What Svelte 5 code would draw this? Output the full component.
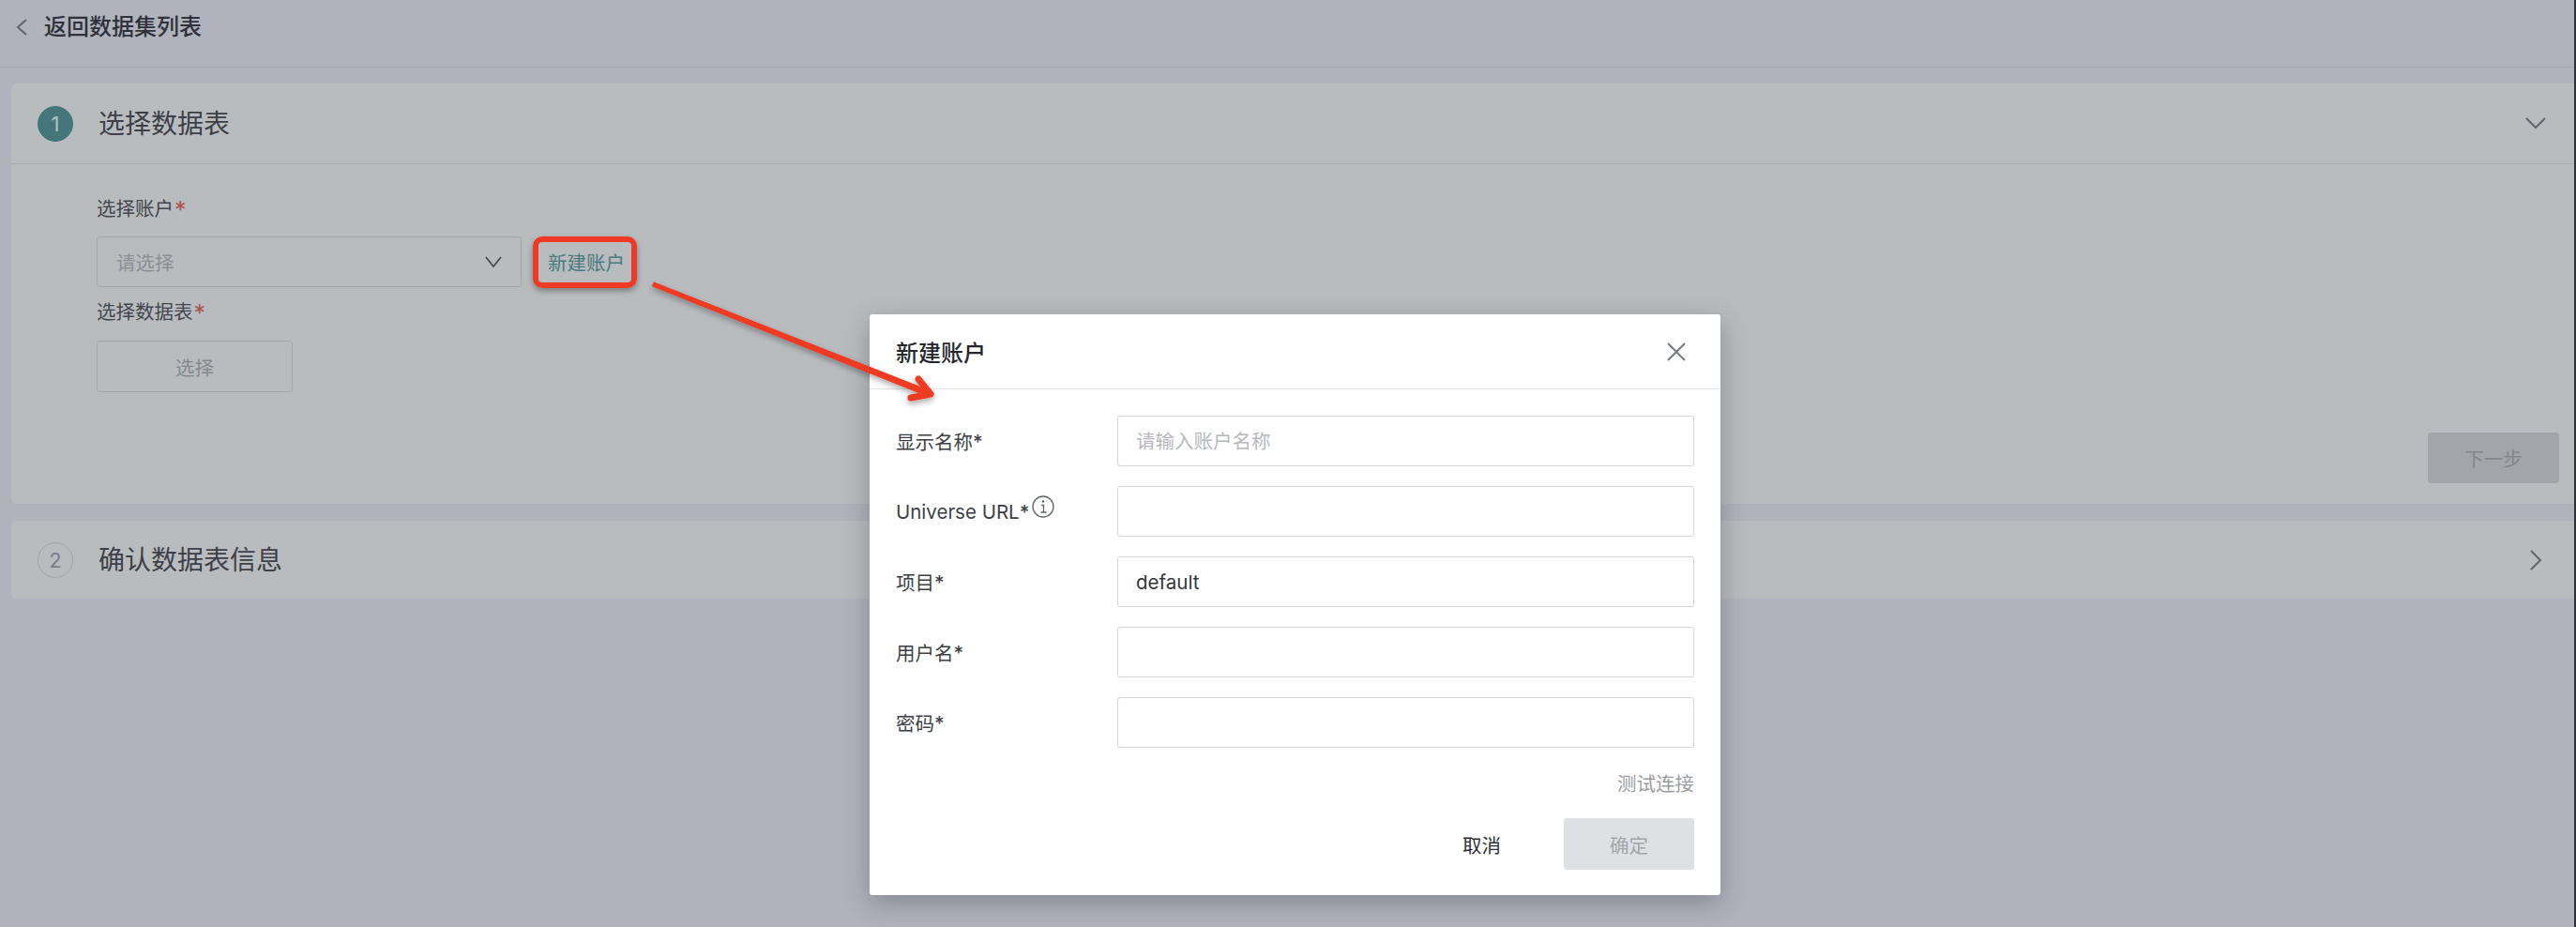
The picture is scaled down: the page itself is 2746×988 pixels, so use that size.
<script lang="ts">
  const fields = [
    { label: '显示名称', placeholder: '请输入账户名称', value: '' },
    { label: 'Universe URL', placeholder: '', value: '', info: true },
    { label: '项目', placeholder: '', value: 'default' },
    { label: '用户名', placeholder: '', value: '' },
    { label: '密码', placeholder: '', value: '' }
  ];
</script>

<div class="page">
  <header class="topbar">
    <svg class="back" width="12" height="18" viewBox="0 0 12 18"><path d="M11 1 2 9l9 8" /></svg>
    <span>返回数据集列表</span>
  </header>

  <main class="content">
    <section class="card first">
      <div class="card-head">
        <span class="step active">1</span>
        <h2>选择数据表</h2>
        <svg class="chev" width="22" height="13" viewBox="0 0 22 13"><path d="M1 1l10 10L21 1" /></svg>
      </div>
      <div class="card-body">
        <div class="lbl">选择账户<i>*</i></div>
        <div class="row">
          <div class="select">
            <span>请选择</span>
            <svg width="18" height="12" viewBox="0 0 18 12"><path d="M1 1l8 10 8-10" /></svg>
          </div>
          <a class="new-link">新建账户</a>
        </div>
        <div class="lbl second">选择数据表<i>*</i></div>
        <button class="pick">选择</button>
        <div class="next-row"><button class="next">下一步</button></div>
      </div>
    </section>

    <section class="card">
      <div class="card-head short">
        <span class="step">2</span>
        <h2>确认数据表信息</h2>
        <svg class="chev" width="13" height="22" viewBox="0 0 13 22"><path d="M1 1l10 10L1 21" /></svg>
      </div>
    </section>
  </main>

  <div class="modal">
    <div class="modal-head">
      <strong>新建账户</strong>
      <svg class="close" width="22" height="22" viewBox="0 0 22 22"><path d="M2 2l18 18M20 2 2 20" /></svg>
    </div>
    <div class="modal-body">
      {#each fields as f}
        <div class="field">
          <label>
            {f.label}<b>*</b>
            {#if f.info}
              <svg class="info" width="24" height="24" viewBox="0 0 24 24">
                <circle cx="12" cy="12" r="11" />
                <path d="M10 10.500h2.500V18M9.500 18h6" />
                <circle class="dot" cx="12" cy="6.500" r="1.300" />
              </svg>
            {/if}
          </label>
          <input placeholder={f.placeholder} value={f.value} />
        </div>
      {/each}
      <div class="test">测试连接</div>
      <div class="actions">
        <span class="cancel">取消</span>
        <button class="ok">确定</button>
      </div>
    </div>
  </div>

  <!-- red annotation drawn on top of the screenshot -->
  <div class="redbox"></div>
  <svg class="arrow" width="2744" height="988" viewBox="0 0 2744 988">
    <defs>
      <filter id="sh" x="-10%" y="-10%" width="120%" height="130%">
        <feDropShadow dx="0" dy="3" stdDeviation="3" flood-color="#000" flood-opacity="0.35" />
      </filter>
    </defs>
    <g filter="url(#sh)">
      <path class="shaft" d="M695.500 305 L697 301 L990 416 L988 422 Z" />
      <path class="head" d="M979 404 L992 420 L971 424" />
    </g>
  </svg>
</div>

<style>
  :global(body) {
    margin: 0;
    background: #2f3033;
  }
  .page {
    position: relative;
    width: 2744px;
    height: 988px;
    overflow: hidden;
    background: #b0b3bc;
    font-family: "Inter", "Noto Sans CJK SC", sans-serif;
    color: #33363d;
  }
  .topbar {
    height: 72px;
    box-sizing: border-box;
    border-bottom: 1px solid #a5a8b1;
    display: flex;
    align-items: flex-start;
    padding: 12px 0 0 17px;
    gap: 18px;
    font-size: 24px;
    line-height: 34px;
    font-weight: 500;
    color: #2f323a;
  }
  .back {
    margin-top: 8px;
  }
  .back path,
  .chev path,
  .select path {
    fill: none;
    stroke: #62656e;
    stroke-width: 2;
  }
  .content {
    padding: 17px 0 0 12px;
  }
  .card {
    background: #b9bcbf;
    border-radius: 6px 0 0 6px;
    margin-bottom: 18px;
  }
  .card-head {
    height: 86px;
    box-sizing: border-box;
    border-bottom: 1px solid #a8abb3;
    display: flex;
    align-items: center;
    padding: 0 30px 0 28px;
  }
  .card-head.short {
    height: 83px;
    border-bottom: none;
    padding-right: 34px;
  }
  .card-head h2 {
    flex: 1;
    margin: 0 0 4px 27px;
    font-size: 28px;
    font-weight: 400;
    color: #3d4047;
  }
  .step {
    width: 38px;
    height: 38px;
    box-sizing: border-box;
    border-radius: 50%;
    border: 1px solid #a0a3ab;
    display: flex;
    align-items: center;
    justify-content: center;
    font-size: 22px;
    color: #7a7e88;
  }
  .step.active {
    background: #45777a;
    border-color: #45777a;
    color: #b0c4c5;
  }
  .card-body {
    height: 362px;
    box-sizing: border-box;
    padding: 33px 0 0 91px;
    position: relative;
  }
  .lbl {
    font-size: 20.500px;
    line-height: 30px;
    color: #43464d;
    height: 30px;
  }
  .lbl i {
    color: #a9544f;
    font-style: normal;
    font-size: 25px;
    line-height: 0;
    margin-left: 1px;
    vertical-align: -3px;
  }
  .row {
    display: flex;
    align-items: center;
    margin-top: 14px;
  }
  .select {
    width: 453px;
    height: 54px;
    box-sizing: border-box;
    border: 1px solid #a3a6ad;
    border-radius: 3px;
    display: flex;
    align-items: center;
    justify-content: space-between;
    padding: 0 20px 0 20px;
    font-size: 20.500px;
    color: #8b8e94;
  }
  .select path {
    stroke: #3f4248;
    stroke-width: 1.600;
  }
  .new-link {
    margin-left: 28px;
    font-size: 20.500px;
    color: #4a7a7e;
  }
  .second {
    margin-top: 12px;
  }
  .pick {
    display: block;
    margin-top: 15px;
    width: 209px;
    height: 55px;
    background: transparent;
    border: 1px solid #a3a6ad;
    border-radius: 3px;
    font: inherit;
    font-size: 20.500px;
    color: #85888e;
  }
  .next-row {
    position: absolute;
    right: 16px;
    bottom: 22px;
  }
  .next {
    width: 140px;
    height: 54px;
    border: none;
    border-radius: 3px;
    background: #a2a5ac;
    font: inherit;
    font-size: 20.500px;
    color: #83868d;
  }
  .modal {
    position: absolute;
    left: 927px;
    top: 335px;
    width: 907px;
    height: 619px;
    background: #fff;
    border-radius: 3px;
    box-shadow: 0 8px 28px rgba(30, 32, 40, 0.3);
  }
  .modal-head {
    height: 80px;
    box-sizing: border-box;
    border-bottom: 1px solid #e3e4ea;
    display: flex;
    align-items: center;
    justify-content: space-between;
    padding: 0 36px 0 28px;
  }
  .modal-head strong {
    font-size: 24px;
    font-weight: 500;
    color: #25272c;
  }
  .close path {
    fill: none;
    stroke: #777a82;
    stroke-width: 2;
  }
  .modal-body {
    padding: 28px 28px 0;
  }
  .field {
    display: flex;
    align-items: center;
    height: 54px;
    margin-bottom: 21px;
  }
  .field label {
    width: 236px;
    flex: none;
    font-size: 20.500px;
    color: #3c3f46;
    display: flex;
    align-items: center;
  }
  .field label b {
    font-weight: 500;
  }
  .info {
    margin: -10px 0 0 3px;
  }
  .info circle,
  .info path {
    fill: none;
    stroke: #5f636b;
    stroke-width: 1.300;
  }
  .info circle.dot {
    fill: #5f636b;
    stroke: none;
  }
  .field input {
    flex: 1;
    min-width: 0;
    height: 54px;
    box-sizing: border-box;
    border: 1px solid #d3d5da;
    border-radius: 3px;
    padding: 0 19px;
    font: inherit;
    font-size: 20.500px;
    color: #33363d;
    outline: none;
  }
  .field input::placeholder {
    color: #b6b8bd;
  }
  .test {
    margin-top: 24px;
    text-align: right;
    font-size: 20.500px;
    line-height: 30px;
    color: #9a9ca2;
  }
  .actions {
    display: flex;
    justify-content: flex-end;
    align-items: center;
    margin-top: 21px;
  }
  .cancel {
    font-size: 20.500px;
    color: #2d2f34;
    margin-right: 67px;
  }
  .ok {
    width: 139px;
    height: 55px;
    border: none;
    border-radius: 3px;
    background: #dee0e4;
    font: inherit;
    font-size: 20.500px;
    color: #a3a6ab;
  }
  .redbox {
    position: absolute;
    left: 568px;
    top: 252px;
    width: 111px;
    height: 55px;
    box-sizing: border-box;
    border: 6px solid #ee3a24;
    border-radius: 10px;
    box-shadow: 0 3px 6px rgba(0, 0, 0, 0.35);
  }
  .arrow {
    position: absolute;
    left: 0;
    top: 0;
    pointer-events: none;
  }
  .shaft {
    fill: #ee3a24;
    stroke: #ee3a24;
    stroke-linejoin: round;
    stroke-width: 1;
  }
  .head {
    fill: none;
    stroke: #ee3a24;
    stroke-width: 7;
    stroke-linecap: round;
    stroke-linejoin: round;
  }
</style>
